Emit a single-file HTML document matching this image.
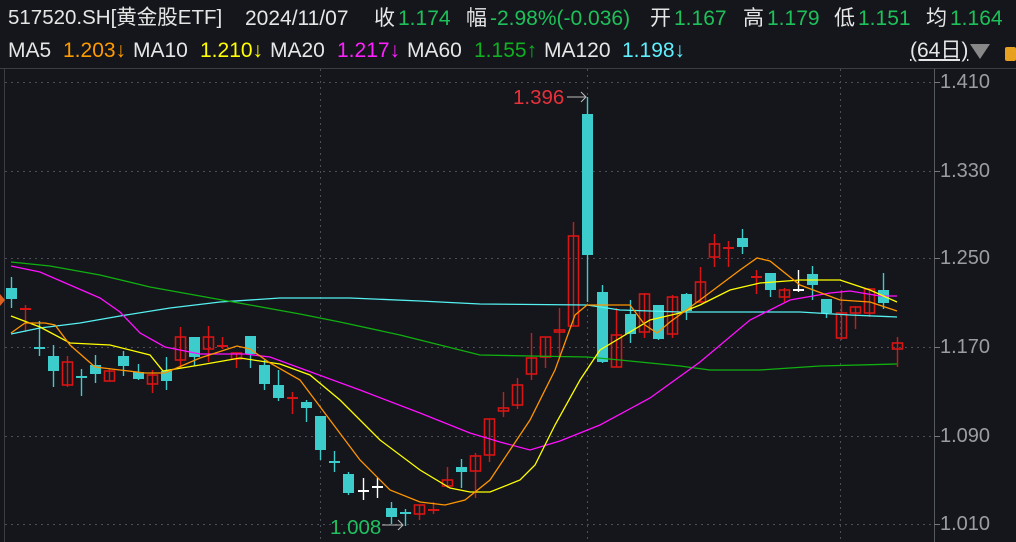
<!DOCTYPE html>
<html><head><meta charset="utf-8"><style>
html,body{margin:0;padding:0;background:#14161b;width:1016px;height:542px;overflow:hidden;font-family:"Liberation Sans","Noto Sans CJK SC",sans-serif}
.t{position:absolute;font-size:21px;white-space:nowrap;line-height:1}
.w{color:#e6e6e6}.g{color:#1ec05a}.o{color:#ff9a00}.y{color:#ffff00}.m{color:#ff20ff}.gg{color:#10b020}.c{color:#5ff0ff}
.ax{position:absolute;left:940px;font-size:20px;color:#9a9ea4;line-height:1}
</style></head><body>
<div class="t w" style="left:8px;top:8px;font-size:20.5px">517520.SH[黄金股ETF]</div>
<div class="t w" style="left:245px;top:8px">2024/11/07</div>
<div class="t w" style="left:374px;top:8px">收</div><div class="t g" style="left:398px;top:8px">1.174</div>
<div class="t w" style="left:466px;top:8px">幅</div><div class="t g" style="left:490px;top:8px">-2.98%(-0.036)</div>
<div class="t w" style="left:650px;top:8px">开</div><div class="t g" style="left:674px;top:8px">1.167</div>
<div class="t w" style="left:743px;top:8px">高</div><div class="t g" style="left:767px;top:8px">1.179</div>
<div class="t w" style="left:834px;top:8px">低</div><div class="t g" style="left:858px;top:8px">1.151</div>
<div class="t w" style="left:926px;top:8px">均</div><div class="t g" style="left:950px;top:8px">1.164</div>
<div class="t w" style="left:8px;top:40px">MA5</div><div class="t o" style="left:63px;top:40px">1.203↓</div>
<div class="t w" style="left:133px;top:40px">MA10</div><div class="t y" style="left:200px;top:40px">1.210↓</div>
<div class="t w" style="left:270px;top:40px">MA20</div><div class="t m" style="left:337px;top:40px">1.217↓</div>
<div class="t w" style="left:407px;top:40px">MA60</div><div class="t gg" style="left:474px;top:40px">1.155↑</div>
<div class="t w" style="left:544px;top:40px">MA120</div><div class="t c" style="left:622px;top:40px">1.198↓</div>
<div class="t w" style="left:910px;top:40px;text-decoration:underline">(64日)</div>
<div style="position:absolute;left:970px;top:44px;width:0;height:0;border-left:10px solid transparent;border-right:10px solid transparent;border-top:15px solid #888"></div>
<div style="position:absolute;left:1005px;top:47px;width:11px;height:14px;background:#e8a020;border-radius:2px"></div>
<div class="ax" style="top:72px">1.410</div>
<div class="ax" style="top:161px">1.330</div>
<div class="ax" style="top:248px">1.250</div>
<div class="ax" style="top:337px">1.170</div>
<div class="ax" style="top:426px">1.090</div>
<div class="ax" style="top:514px">1.010</div>
<svg id="s" width="1016" height="542" style="position:absolute;left:0;top:0" xmlns="http://www.w3.org/2000/svg"></svg>
<script>
var s=document.getElementById('s'),h='';
h+='<line x1="0" y1="68.5" x2="1016" y2="68.5" stroke="#3a3d44"/>';
h+='<line x1="4.5" y1="69" x2="4.5" y2="542" stroke="#3a3d44"/>';
h+='<line x1="934.5" y1="69" x2="934.5" y2="542" stroke="#555a60"/>';
[82,171,258,347,436,524].forEach(function(y){h+='<line x1="5" y1="'+(y+.5)+'" x2="934" y2="'+(y+.5)+'" stroke="#4a4e55" stroke-dasharray="2 4"/><line x1="934" y1="'+(y+.5)+'" x2="940" y2="'+(y+.5)+'" stroke="#777"/>';});
[320,587,840].forEach(function(x){h+='<line x1="'+(x+.5)+'" y1="69" x2="'+(x+.5)+'" y2="542" stroke="#4a4e55" stroke-dasharray="2 4"/>';});
h+='<path d="M0 294 L5 300 L0 306Z" fill="#e06020"/>';
var d=[['c',288,299,277,308],['r',309,309,305,332],['c',348,348,321,356],['c',356,371,345,387],['r',362,385,356,387],['c',377,377,369,396],['c',365,374,355,383],['r',371,381,368,381],['c',356,366,351,376],['c',372,379,364,380],['r',375,384,370,393],['c',371,381,357,390],['r',337,360,327,368],['c',337,357,337,366],['r',337,349,326,362],['r',346,346,337,349],['r',353,359,353,368],['c',336,354,336,368],['c',365,384,360,390],['c',385,398,370,401],['r',398,398,392,414],['c',402,408,400,422],['c',416,450,416,460],['c',462,462,451,472],['c',474,493,472,495],['w',491,491,478,500],['w',487,487,478,498],['c',508,517,502,524],['c',513,513,509,526],['r',505,514,505,520],['r',510,510,502,514],['r',480,486,467,488],['c',467,472,459,488],['r',456,471,453,498],['r',419,455,419,462],['r',408,411,392,417],['r',385,405,378,409],['r',358,374,333,380],['r',337,357,337,368],['r',330,332,308,357],['r',236,326,222,326],['c',114,255,97,302],['c',292,362,285,363],['r',335,367,308,367],['c',314,334,300,343],['r',294,332,293,338],['c',305,339,305,340],['r',297,334,295,338],['c',294,311,293,320],['r',282,302,267,302],['r',244,257,234,267],['r',248,248,241,267],['c',238,247,229,254],['r',277,277,270,294],['c',273,290,273,297],['r',290,297,288,303],['w',290,290,270,292],['c',274,285,266,300],['c',299,313,299,318],['r',313,338,290,340],['r',307,313,306,329],['r',289,313,289,317],['c',290,303,273,309],['r',343,349,337,367]];
d.forEach(function(e,i){var x=Math.round(11+14.06*i)+.5,col=e[0]=='c'?'#3ccccc':e[0]=='r'?'#d81414':'#ffffff';
h+='<line x1="'+x+'" y1="'+e[3]+'" x2="'+x+'" y2="'+e[4]+'" stroke="'+col+'" stroke-width="1.4"/>';
var bh=e[2]-e[1];
if(bh<2){h+='<line x1="'+(x-5.5)+'" y1="'+e[1]+'" x2="'+(x+5.5)+'" y2="'+e[1]+'" stroke="'+col+'" stroke-width="2"/>';}
else if(e[0]=='r'){h+='<rect x="'+(x-5)+'" y="'+e[1]+'" width="10" height="'+bh+'" fill="none" stroke="'+col+'" stroke-width="1.6"/>';}
else{h+='<rect x="'+(x-5.5)+'" y="'+e[1]+'" width="11" height="'+bh+'" fill="'+col+'"/>';}});
function pl(p,c){h+='<polyline points="'+p+'" fill="none" stroke="'+c+'" stroke-width="1.3"/>';}
pl('11,334 40,328 80,323 120,316 170,308 220,302 280,298 350,298 420,301 480,304 587,305 620,310 680,312 760,312 800,312 850,315 897,317','#55f0f0');
pl('11,262 50,266 100,275 150,287 200,296 250,305 300,314 340,322 400,335 480,355 530,356 587,357 620,360 680,366 710,370 760,370 820,366 897,364','#10b010');
pl('11,266 40,272 70,285 100,298 120,312 140,333 165,347 200,354 245,354 270,357 300,368 360,390 420,413 470,433 500,442 530,450 560,441 600,425 650,398 700,362 750,320 790,300 830,293 850,291 880,296 897,296','#ff10ff');
pl('11,316 40,327 70,343 110,345 150,355 163,371 200,365 240,358 280,364 310,375 340,400 380,440 420,470 450,488 470,492 490,492 520,480 535,465 555,425 580,380 600,350 620,338 650,320 680,313 700,305 730,290 760,283 800,280 840,280 870,290 897,302','#ffff00');
pl('11,333 25,323 45,323 55,325 70,345 95,367 120,370 145,373 165,373 200,358 237,346 250,349 270,363 300,380 330,420 360,460 390,490 420,502 445,505 465,500 490,480 510,450 530,420 555,370 575,315 587,305 630,305 645,325 657,333 670,322 700,300 740,270 757,258 770,261 800,285 840,300 870,302 897,311','#ff9500');
h+='<text x="513" y="104" fill="#e8303a" font-size="20.5" font-family="Liberation Sans">1.396</text><polyline points="567,97 586,97" stroke="#bbb" fill="none"/><polyline points="581,92 586,97 581,102" stroke="#bbb" fill="none"/>';
h+='<text x="330" y="534" fill="#20c060" font-size="20.5" font-family="Liberation Sans">1.008</text><polyline points="382,525 403,525" stroke="#bbb" fill="none"/><polyline points="398,520 403,525 398,530" stroke="#bbb" fill="none"/>';
s.innerHTML=h;
</script>
</body></html>
